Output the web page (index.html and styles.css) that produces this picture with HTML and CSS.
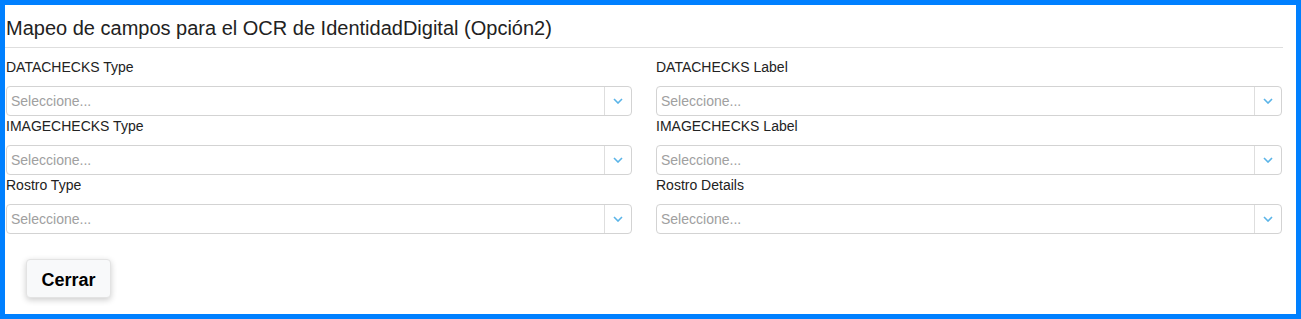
FILE: index.html
```html
<!DOCTYPE html>
<html lang="es">
<head>
    <meta charset="UTF-8">
    <title>Mapeo de campos</title>
    <link rel="stylesheet" href="styles.css">
</head>
<body>
    <div class="frame">
        <div class="title">Mapeo de campos para el OCR de IdentidadDigital (Opción2)</div>
        <div class="fields">
            <div class="field">
                <label>DATACHECKS Type</label>
                <div class="select">
                    <span class="placeholder">Seleccione...</span>
                    <span class="arrow"><svg width="10" height="6" viewBox="0 0 10 6"><path d="M1 1 L5 5 L9 1" fill="none" stroke="#5ab4e8" stroke-width="1.6"/></svg></span>
                </div>
            </div>
            <div class="field">
                <label>DATACHECKS Label</label>
                <div class="select">
                    <span class="placeholder">Seleccione...</span>
                    <span class="arrow"><svg width="10" height="6" viewBox="0 0 10 6"><path d="M1 1 L5 5 L9 1" fill="none" stroke="#5ab4e8" stroke-width="1.6"/></svg></span>
                </div>
            </div>
            <div class="field">
                <label>IMAGECHECKS Type</label>
                <div class="select">
                    <span class="placeholder">Seleccione...</span>
                    <span class="arrow"><svg width="10" height="6" viewBox="0 0 10 6"><path d="M1 1 L5 5 L9 1" fill="none" stroke="#5ab4e8" stroke-width="1.6"/></svg></span>
                </div>
            </div>
            <div class="field">
                <label>IMAGECHECKS Label</label>
                <div class="select">
                    <span class="placeholder">Seleccione...</span>
                    <span class="arrow"><svg width="10" height="6" viewBox="0 0 10 6"><path d="M1 1 L5 5 L9 1" fill="none" stroke="#5ab4e8" stroke-width="1.6"/></svg></span>
                </div>
            </div>
            <div class="field">
                <label>Rostro Type</label>
                <div class="select">
                    <span class="placeholder">Seleccione...</span>
                    <span class="arrow"><svg width="10" height="6" viewBox="0 0 10 6"><path d="M1 1 L5 5 L9 1" fill="none" stroke="#5ab4e8" stroke-width="1.6"/></svg></span>
                </div>
            </div>
            <div class="field">
                <label>Rostro Details</label>
                <div class="select">
                    <span class="placeholder">Seleccione...</span>
                    <span class="arrow"><svg width="10" height="6" viewBox="0 0 10 6"><path d="M1 1 L5 5 L9 1" fill="none" stroke="#5ab4e8" stroke-width="1.6"/></svg></span>
                </div>
            </div>
        </div>
        <button class="close-btn" type="button">Cerrar</button>
    </div>
</body>
</html>
```
FILE: styles.css
```css
body {
    margin: 0;
    font-family: "Liberation Sans", Arial, sans-serif;
    color: #222;
    background: #fff;
}
.frame {
    height: 319px;
    box-sizing: border-box;
    border: 5px solid #0080ff;
    padding: 0 13px 0 0;
}
.title {
    font-size: 20px;
    line-height: 20px;
    padding: 13px 1px 9px;
    border-bottom: 1px solid #dedede;
}
.fields {
    display: grid;
    grid-template-columns: 1fr 1fr;
    column-gap: 24px;
    margin: 9px 1px 0;
}
.field label {
    display: block;
    font-size: 14px;
    line-height: 20px;
    margin-bottom: 9px;
}
.select {
    display: flex;
    height: 30px;
    box-sizing: border-box;
    border: 1px solid #d3d3d3;
    border-radius: 4px;
}
.placeholder {
    flex: 1;
    font-size: 14px;
    line-height: 28px;
    padding-left: 4px;
    color: #a0a0a0;
}
.arrow {
    width: 26px;
    border-left: 1px solid #dedede;
    display: flex;
    align-items: center;
    justify-content: center;
}
.close-btn {
    margin: 25px 0 0 21px;
    width: 85px;
    height: 39px;
    padding: 3px 0 0;
    font-family: "Liberation Sans", Arial, sans-serif;
    font-size: 18px;
    font-weight: bold;
    color: #000;
    background: #f8f9fa;
    border: 1px solid #e3e3e3;
    border-radius: 4px;
    box-shadow: 0 2px 6px rgba(0, 0, 0, 0.2);
    cursor: pointer;
}
```
